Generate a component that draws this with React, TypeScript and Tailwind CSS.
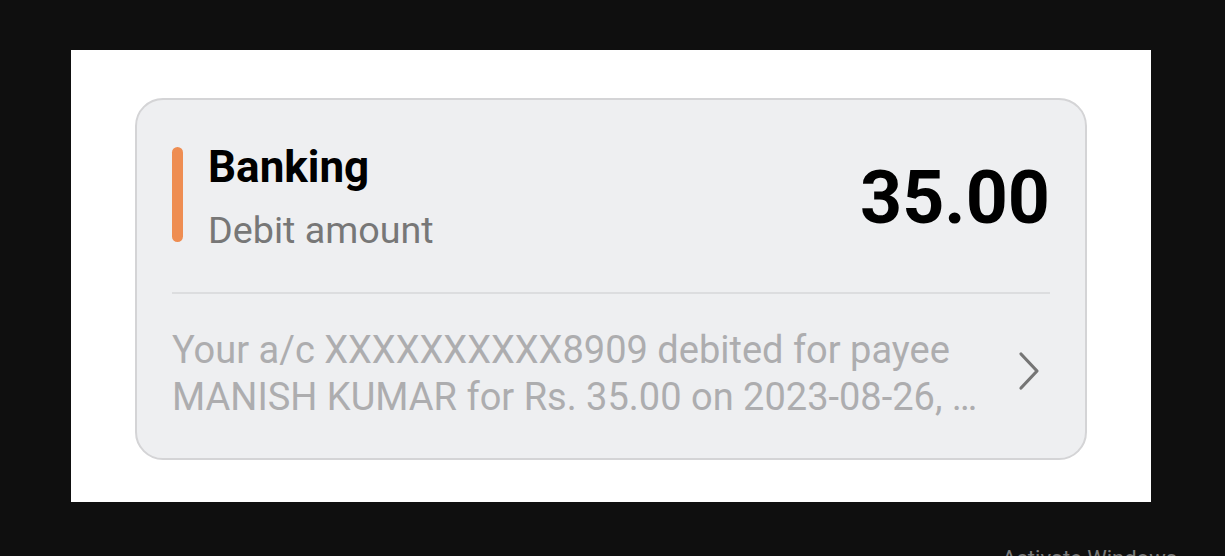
export default function App() {
  return (
    <div className="relative h-[556px] w-[1225px] overflow-hidden bg-[#0f0f0f] pl-[71px] pt-[50px]" style={{ fontFamily: 'Roboto, "Noto Sans", sans-serif' }}>
      <div className="h-[452px] w-[1080px] bg-white pl-[64px] pt-[48px]">
        <div className="h-[362px] w-[952px] rounded-[28px] border-2 border-[#d4d4d6] bg-[#eeeff1] px-[35px]">
          <div className="flex h-[192px] items-start">
            <div className="mt-[47px] h-[95px] w-[11px] rounded-full bg-[#ee8d52]" />
            <div className="ml-[25px] mt-[41px] flex flex-col">
              <div className="text-[44px] font-bold leading-[52px] text-black">Banking</div>
              <div className="mt-[15px] text-[37.7px] leading-[44px] text-[#777777]">Debit amount</div>
            </div>
            <div className="ml-auto mt-[62px] text-[73.5px] font-bold leading-none text-black">35.00</div>
          </div>
          <div className="h-[2px] bg-[#dcdddf]" />
          <div className="flex items-center pt-[33px]">
            <div className="w-[800px] text-[38px] leading-[47px] text-[#adadaf]">
              <div className="whitespace-nowrap">Your a/c XXXXXXXXXX8909 debited for payee</div>
              <div className="whitespace-nowrap">MANISH KUMAR for Rs. 35.00 on 2023-08-26, …</div>
            </div>
            <svg className="ml-auto mb-[6px] mr-[9px]" width="24" height="40" viewBox="0 0 24 40" fill="none">
              <path d="M4 3 L20 20 L4 37" stroke="#757575" strokeWidth="3.2" strokeLinecap="round" strokeLinejoin="round" />
            </svg>
          </div>
        </div>
      </div>
      <div className="absolute left-[1002px] top-[548px] whitespace-nowrap text-[22px] leading-none text-[#7a7a7a]">Activate Windows</div>
    </div>
  );
}
